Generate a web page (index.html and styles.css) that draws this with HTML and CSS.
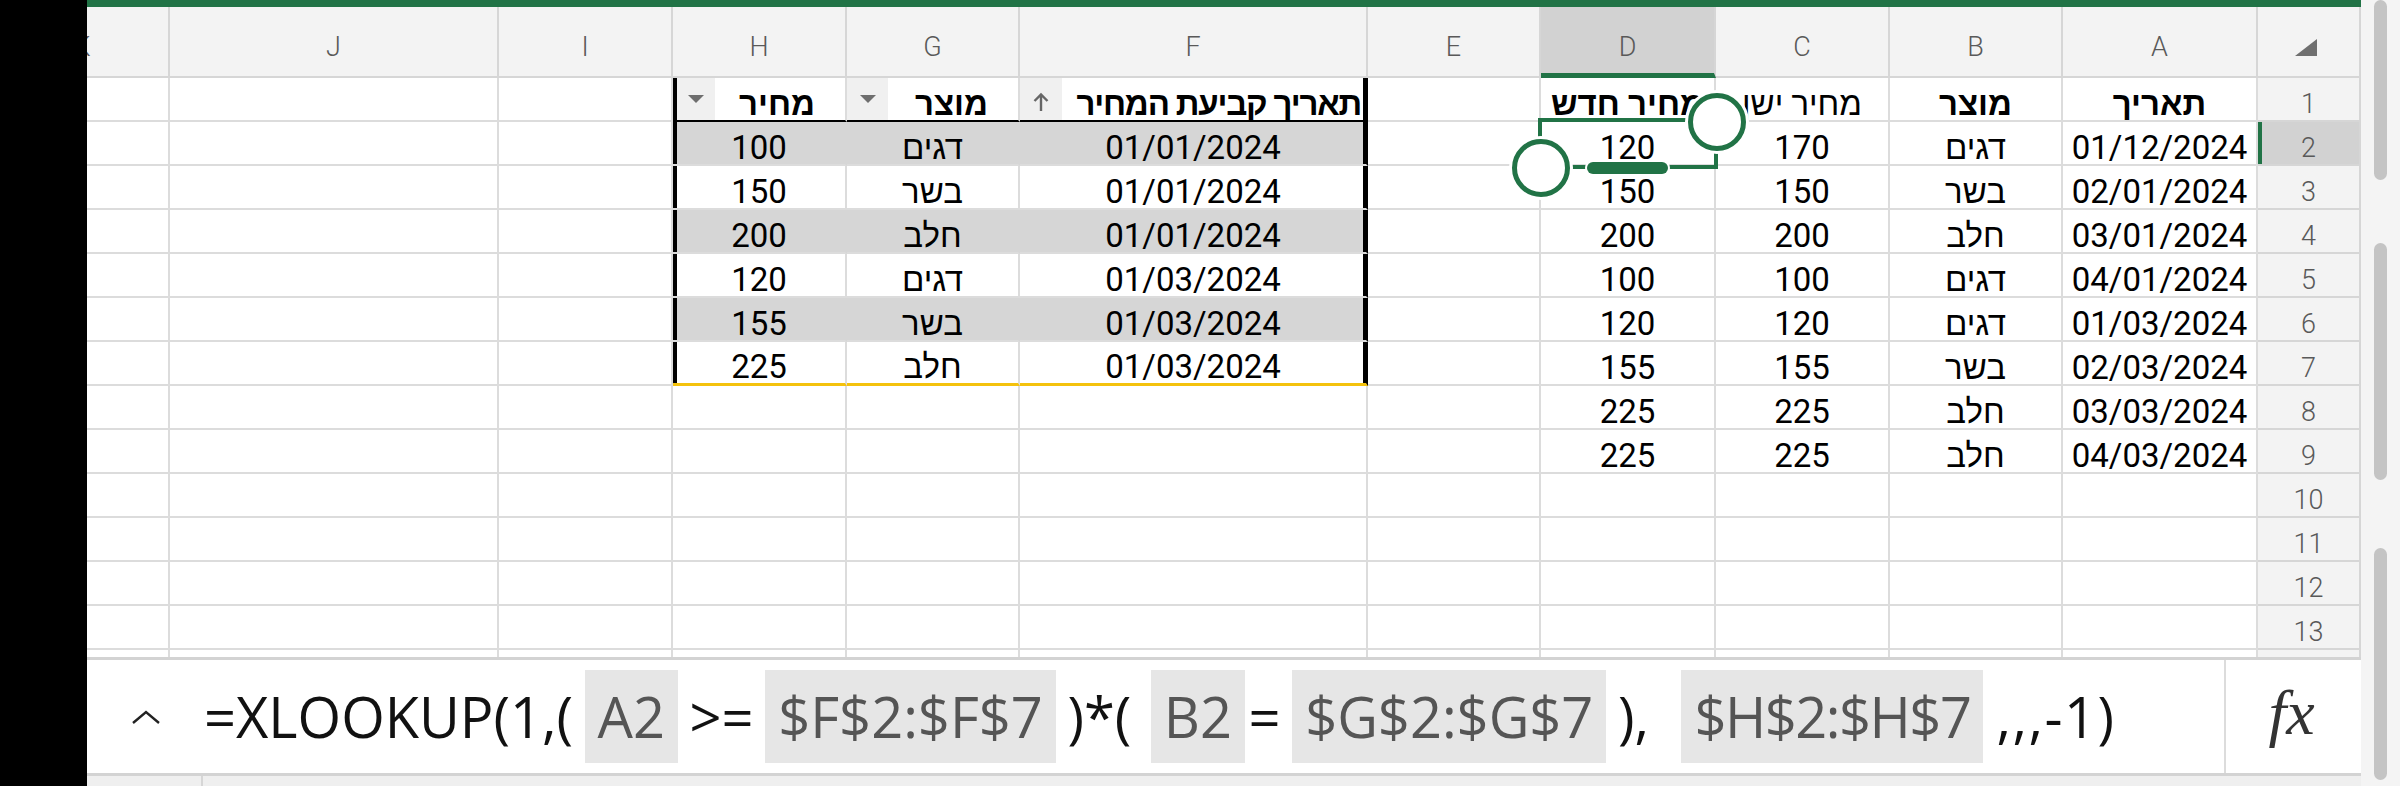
FILE: index.html
```html
<!DOCTYPE html>
<html lang="he">
<head>
<meta charset="utf-8">
<title>Excel</title>
<link rel="stylesheet" href="styles.css">
</head>
<body>
<div class="screen">
  <div class="bezel"></div>
  <div class="app">
    <div class="main">
      <div class="topbar"></div>
      <div class="sheet">
        <div class="grid">
          <div class="row hdr">
            <div>K</div><div>J</div><div>I</div><div>H</div><div>G</div><div>F</div><div>E</div><div class="sel">D</div><div>C</div><div>B</div><div>A</div>
            <div class="corner"><svg width="22" height="17" viewBox="0 0 22 17"><polygon points="22,0 22,17 0,17" fill="#6f6f6f"/></svg></div>
          </div>
          <div class="row">
            <div></div><div></div><div></div>
            <div class="th tl"><span class="fbtn first"><i class="tri"></i></span><span class="thx">מחיר</span></div>
            <div class="th"><span class="fbtn"><i class="tri"></i></span><span class="thx">מוצר</span></div>
            <div class="th tr"><span class="fbtn sort"><svg width="18" height="20" viewBox="0 0 18 20"><path d="M9 19V2.5M2.5 9L9 2.5 15.5 9" fill="none" stroke="#666" stroke-width="2.4"/></svg></span><span class="thx thf">תאריך קביעת המחיר</span></div>
            <div></div>
            <div class="b">מחיר חדש</div><div>מחיר ישן</div><div class="b">מוצר</div><div class="b">תאריך</div><div class="rh">1</div>
          </div>
          <div class="row">
            <div></div><div></div><div></div>
            <div class="tl band">100</div><div class="band">דגים</div><div class="tr band">01/01/2024</div>
            <div></div><div>120</div><div>170</div><div>דגים</div><div>01/12/2024</div><div class="rh sel">2</div>
          </div>
          <div class="row">
            <div></div><div></div><div></div>
            <div class="tl">150</div><div>בשר</div><div class="tr">01/01/2024</div>
            <div></div><div>150</div><div>150</div><div>בשר</div><div>02/01/2024</div><div class="rh">3</div>
          </div>
          <div class="row">
            <div></div><div></div><div></div>
            <div class="tl band">200</div><div class="band">חלב</div><div class="tr band">01/01/2024</div>
            <div></div><div>200</div><div>200</div><div>חלב</div><div>03/01/2024</div><div class="rh">4</div>
          </div>
          <div class="row">
            <div></div><div></div><div></div>
            <div class="tl">120</div><div>דגים</div><div class="tr">01/03/2024</div>
            <div></div><div>100</div><div>100</div><div>דגים</div><div>04/01/2024</div><div class="rh">5</div>
          </div>
          <div class="row">
            <div></div><div></div><div></div>
            <div class="tl band">155</div><div class="band">בשר</div><div class="tr band">01/03/2024</div>
            <div></div><div>120</div><div>120</div><div>דגים</div><div>01/03/2024</div><div class="rh">6</div>
          </div>
          <div class="row">
            <div></div><div></div><div></div>
            <div class="tl tlast">225</div><div class="tlast">חלב</div><div class="tr tlast">01/03/2024</div>
            <div></div><div>155</div><div>155</div><div>בשר</div><div>02/03/2024</div><div class="rh">7</div>
          </div>
          <div class="row">
            <div></div><div></div><div></div><div></div><div></div><div></div><div></div>
            <div>225</div><div>225</div><div>חלב</div><div>03/03/2024</div><div class="rh">8</div>
          </div>
          <div class="row">
            <div></div><div></div><div></div><div></div><div></div><div></div><div></div>
            <div>225</div><div>225</div><div>חלב</div><div>04/03/2024</div><div class="rh">9</div>
          </div>
          <div class="row">
            <div></div><div></div><div></div><div></div><div></div><div></div><div></div><div></div><div></div><div></div><div></div><div class="rh">10</div>
          </div>
          <div class="row">
            <div></div><div></div><div></div><div></div><div></div><div></div><div></div><div></div><div></div><div></div><div></div><div class="rh">11</div>
          </div>
          <div class="row">
            <div></div><div></div><div></div><div></div><div></div><div></div><div></div><div></div><div></div><div></div><div></div><div class="rh">12</div>
          </div>
          <div class="row">
            <div></div><div></div><div></div><div></div><div></div><div></div><div></div><div></div><div></div><div></div><div></div><div class="rh">13</div>
          </div>
          <div class="row">
            <div></div><div></div><div></div><div></div><div></div><div></div><div></div><div></div><div></div><div></div><div></div><div class="rh"></div>
          </div>

          <div class="selbox"></div>
          <div class="pill"></div>
          <div class="handle h-tr"></div>
          <div class="handle h-bl"></div>
        </div>
      </div>
      <div class="fbar">
        <div class="fb-toggle"><svg width="30" height="16" viewBox="0 0 30 16"><polyline points="2,14 15,3 28,14" fill="none" stroke="#222" stroke-width="2.4"/></svg></div>
        <div class="fb-text">=XLOOKUP(1,( <span class="ref">A2</span> &gt;= <span class="ref">$F$2:$F$7</span> )*( <span class="ref r-b2">B2</span> = <span class="ref">$G$2:$G$7</span> ), <span class="ref r-h">$H$2:$H$7</span><span class="tail"> ,,,-1)</span></div>
        <div class="fb-fx"><span class="fx">fx</span></div>
      </div>
      <div class="status"><div class="seg"></div></div>
    </div>
    <div class="vscroll">
      <div class="thumb t1"></div>
      <div class="thumb t2"></div>
      <div class="thumb t3"></div>
    </div>
  </div>
</div>
</body>
</html>
```

FILE: styles.css
```css
html, body {
  margin: 0;
  padding: 0;
}
body {
  background: #000;
  width: 2400px;
  height: 786px;
  overflow: hidden;
  font-family: Roboto, "Liberation Sans", "DejaVu Sans", sans-serif;
}
.screen {
  display: flex;
  height: 786px;
}
.bezel {
  width: 87px;
  flex: none;
  background: #000;
}
.app {
  flex: 1;
  display: flex;
  background: #fff;
}
.main {
  width: 2274px;
  flex: none;
  display: flex;
  flex-direction: column;
}
.topbar {
  height: 7px;
  background: #217346;
}
.sheet {
  height: 650px;
  overflow: hidden;
}
.grid {
  position: relative;
  margin-left: -91px;
  width: 2365px;
}
.row {
  display: grid;
  grid-template-columns: 174px 329px 174px 174px 173px 348px 173px 175px 174px 173px 195px 103px;
  height: 44px;
}
.row > div {
  box-sizing: border-box;
  border-right: 2px solid #dcdcdc;
  border-bottom: 2px solid #dcdcdc;
  display: flex;
  align-items: flex-end;
  justify-content: center;
  overflow: hidden;
  white-space: nowrap;
  font-size: 33px;
  line-height: 33px;
  color: #000;
}
.row > div.b {
  font-weight: 700;
}

/* column header row */
.row.hdr {
  height: 71px;
}
.row.hdr > div {
  background: #f3f3f3;
  border-right-color: #d6d6d6;
  border-bottom-color: #d6d6d6;
  font-size: 27px;
  line-height: 27px;
  font-weight: 300;
  color: #595959;
  padding-bottom: 15px;
}
.row.hdr > div.sel {
  background: #d2d2d2;
  border-bottom: 5px solid #217346;
  padding-bottom: 12px;
}
.row.hdr > div.corner {
  padding-bottom: 20px;
  padding-right: 6px;
  line-height: 0;
}
.corner svg {
  display: block;
}

/* row header column */
.row > div.rh {
  background: #f3f3f3;
  border-right-color: #d6d6d6;
  border-bottom-color: #d6d6d6;
  font-size: 27px;
  line-height: 27px;
  font-weight: 300;
  color: #595959;
  padding-bottom: 2px;
}
.row > div.rh.sel {
  background: #d2d2d2;
  box-shadow: inset 4px 0 0 #217346;
}

/* table F:H */
.row > div.band {
  background: #d6d6d6;
  border-right-color: #d6d6d6;
}
.row > div.tl {
  box-shadow: inset 4px 0 0 #000;
}
.row > div.tr {
  border-right-color: #000;
  box-shadow: inset -3px 0 0 #000;
}
.row > div.tlast {
  border-bottom: 3px solid #f4c20d;
}
.row > div.th {
  justify-content: flex-start;
  align-items: stretch;
  border-bottom-color: #000;
  background: #fff;
}
.fbtn {
  flex: none;
  width: 41px;
  background: #f0f0f0;
  display: flex;
  justify-content: center;
  align-items: flex-start;
  padding-top: 17px;
  box-sizing: border-box;
}
.fbtn.first {
  width: 38px;
  margin-left: 4px;
}
.fbtn.sort {
  width: 42px;
  padding-top: 14px;
}
.fbtn svg {
  display: block;
}
.tri {
  display: block;
  width: 0;
  height: 0;
  border-left: 8px solid transparent;
  border-right: 8px solid transparent;
  border-top: 8px solid #6e6e6e;
}
.thx {
  flex: 1;
  min-width: 0;
  align-self: flex-end;
  direction: rtl;
  text-align: start;
  padding-right: 30px;
  font-weight: 700;
}
.thx.thf {
  padding-right: 5px;
  letter-spacing: -1.2px;
}

/* selection of D2 */
.selbox {
  position: absolute;
  left: 1542px;
  top: 111px;
  width: 180px;
  height: 51px;
  box-sizing: border-box;
  border: 4px solid #217346;
}
.pill {
  position: absolute;
  left: 1591px;
  top: 155px;
  width: 81px;
  height: 12px;
  border-radius: 6px;
  background: #217346;
  box-shadow: 0 0 0 2px #fff;
}
.handle {
  position: absolute;
  width: 58px;
  height: 58px;
  box-sizing: border-box;
  border: 5px solid #217346;
  border-radius: 50%;
  background: #fff;
  box-shadow: 0 0 0 3px #fff;
}
.h-tr {
  left: 1692px;
  top: 86px;
}
.h-bl {
  left: 1516px;
  top: 132px;
}

/* formula bar */
.fbar {
  height: 119px;
  box-sizing: border-box;
  border-top: 3px solid #d3d3d3;
  border-bottom: 3px solid #d3d3d3;
  background: #fff;
  display: flex;
  align-items: center;
}
.fb-toggle {
  width: 117px;
  flex: none;
  box-sizing: border-box;
  padding-left: 44px;
  display: flex;
  align-items: center;
}
.fb-toggle svg {
  display: block;
}
.fb-text {
  flex: 1;
  min-width: 0;
  font-family: "Open Sans", "Noto Sans", sans-serif;
  font-size: 56px;
  line-height: 93px;
  height: 93px;
  white-space: nowrap;
  word-spacing: -3px;
  color: #111;
}
.ref {
  display: inline-block;
  vertical-align: top;
  height: 93px;
  line-height: 93px;
  padding: 0 13px;
  background: #e6e6e6;
  color: #555;
}
.ref.r-b2 {
  margin-left: 8px;
  margin-right: -8px;
}
.ref.r-h {
  margin-left: 20px;
  letter-spacing: -1.5px;
  padding: 0 13px 0 14px;
}
.tail {
  letter-spacing: 1.5px;
}
.fb-fx {
  width: 137px;
  flex: none;
  align-self: stretch;
  box-sizing: border-box;
  border-left: 2px solid #dcdcdc;
  display: flex;
  align-items: center;
  justify-content: center;
}
.fx {
  display: inline-block;
  padding: 6px 10px 14px 6px;
  font-family: "Liberation Serif", "DejaVu Serif", serif;
  font-style: italic;
  font-size: 64px;
  line-height: 64px;
  color: #333;
}
.status {
  height: 10px;
  background: #efefef;
  display: flex;
}
.status .seg {
  width: 114px;
  border-right: 2px solid #d6d6d6;
}

/* vertical scroller */
.vscroll {
  flex: 1;
  background: #f4f4f4;
  display: flex;
  flex-direction: column;
}
.thumb {
  width: 13px;
  margin-left: 13px;
  background: #c4c4c4;
  border-radius: 7px;
  flex: none;
}
.t1 {
  height: 180px;
}
.t2 {
  margin-top: 63px;
  height: 237px;
}
.t3 {
  margin-top: 68px;
  height: 232px;
}
```
